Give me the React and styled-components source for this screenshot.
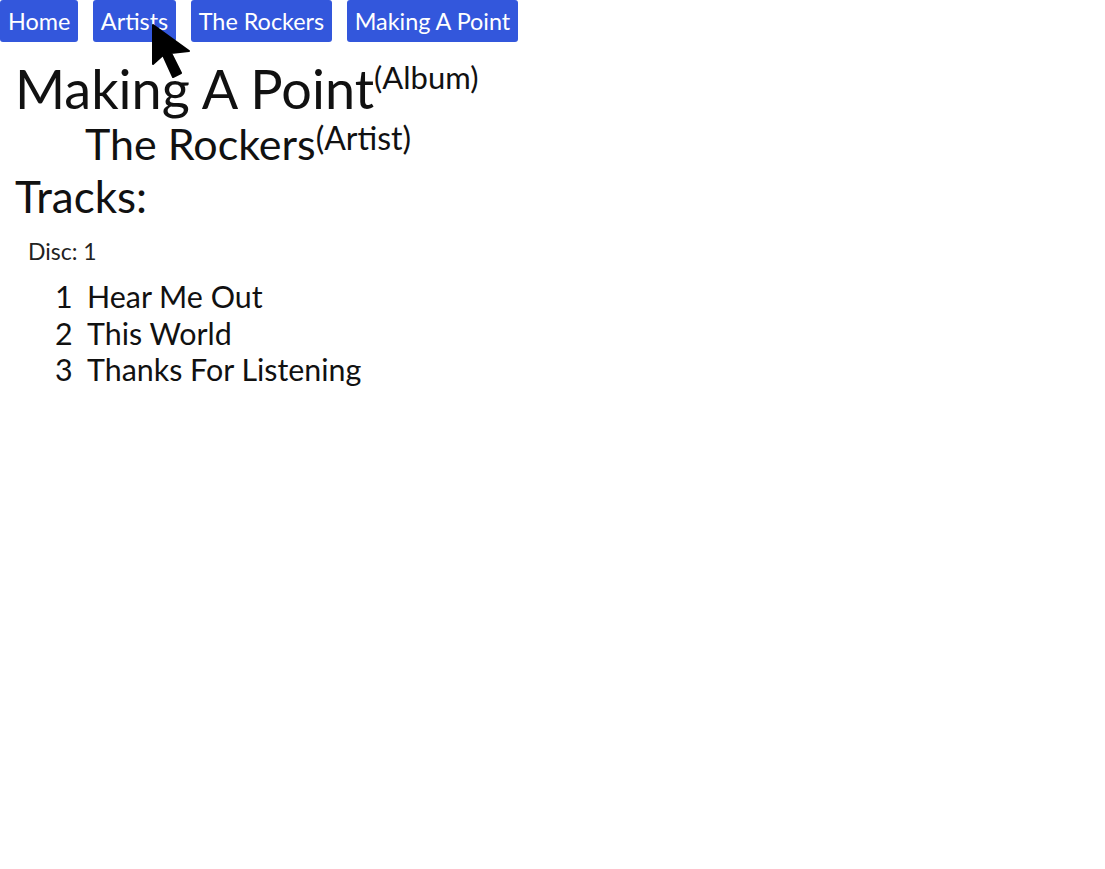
import React from 'react';
import styled, { createGlobalStyle } from 'styled-components';

const GlobalStyle = createGlobalStyle`
  body {
    margin: 0;
    background: #fff;
    font-family: Lato, "Liberation Sans", sans-serif;
    color: #111;
  }
`;

const Page = styled.div`
  position: relative;
`;

const Nav = styled.nav`
  display: flex;
  gap: 14.5px;
`;

const NavButton = styled.a`
  display: inline-flex;
  align-items: center;
  height: 42px;
  padding: 0 8px;
  background: #3357dc;
  color: #fff;
  border-radius: 3px;
  font-size: 23.4px;
  text-decoration: none;
  box-sizing: border-box;
`;

const Content = styled.main`
  padding-left: 15px;
`;

const Title = styled.h1`
  margin: 20px 0 0;
  font-size: 54px;
  font-weight: 400;
  line-height: 1;
`;

const Sup = styled.sup`
  font-size: ${p => p.size}px;
  line-height: 1;
  vertical-align: top;
`;

const Artist = styled.h2`
  margin: 6px 0 0 70px;
  font-size: 43px;
  font-weight: 400;
  line-height: 1;
`;

const Tracks = styled.h3`
  margin: 9px 0 0;
  font-size: 44px;
  font-weight: 400;
  line-height: 1;
`;

const Disc = styled.div`
  margin: 22px 0 0 13px;
  font-size: 23px;
  line-height: 1;
  color: #222;
`;

const TrackList = styled.ol`
  list-style: none;
  margin: 15px 0 0 40px;
  padding: 0;
`;

const Track = styled.li`
  display: flex;
  font-size: 30.4px;
  line-height: 36.7px;
`;

const TrackNo = styled.span`
  width: 32px;
`;

const Cursor = styled.svg`
  position: absolute;
  left: 151px;
  top: 24px;
`;

const tracks = ['Hear Me Out', 'This World', 'Thanks For Listening'];

export default function App() {
  return (
    <Page>
      <GlobalStyle />
      <Nav>
        <NavButton>Home</NavButton>
        <NavButton>Artists</NavButton>
        <NavButton>The Rockers</NavButton>
        <NavButton>Making A Point</NavButton>
      </Nav>
      <Content>
        <Title>Making A Point<Sup size={31}>(Album)</Sup></Title>
        <Artist>The Rockers<Sup size={32}>(Artist)</Sup></Artist>
        <Tracks>Tracks:</Tracks>
        <Disc>Disc: 1</Disc>
        <TrackList>
          {tracks.map((t, i) => (
            <Track key={t}>
              <TrackNo>{i + 1}</TrackNo>
              {t}
            </Track>
          ))}
        </TrackList>
      </Content>
      <Cursor width="44" height="56" viewBox="0 0 44 56">
        <path d="M2 1 L2 40 L12 31 L22 53 L30 49 L20 29 L38 27 Z" fill="#000" stroke="#000" strokeWidth="2" strokeLinejoin="round" />
      </Cursor>
    </Page>
  );
}
